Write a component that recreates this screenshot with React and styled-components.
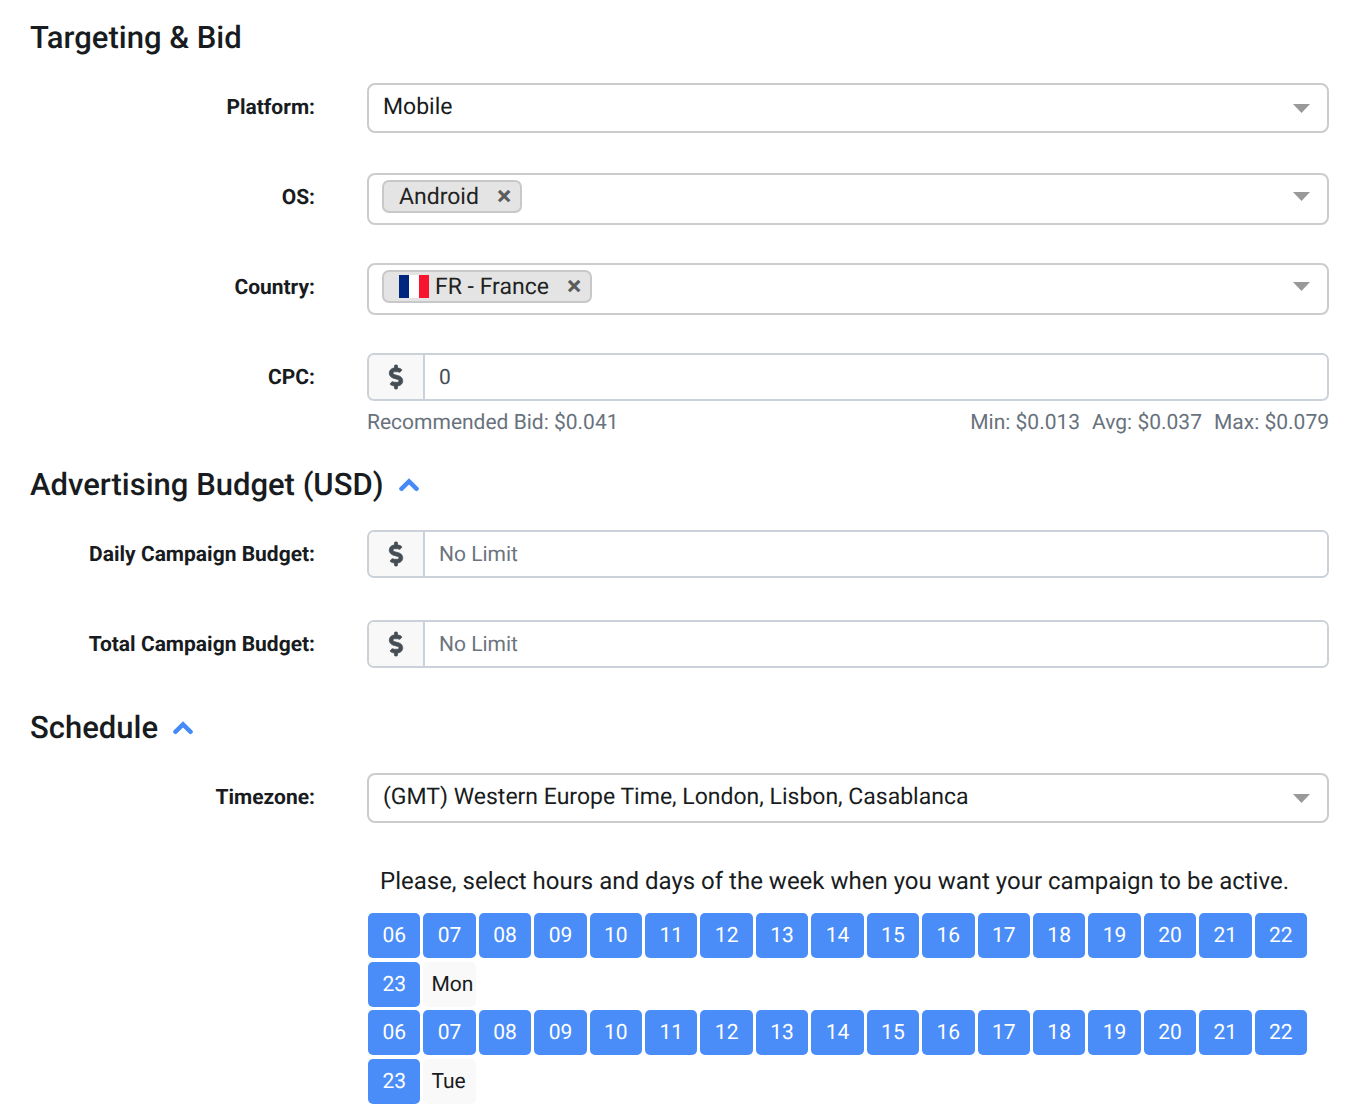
import React, { useState } from "react";
import styled, { createGlobalStyle } from "styled-components";
import { FaDollarSign } from "react-icons/fa";

const GlobalStyle = createGlobalStyle`
  *, *::before, *::after { box-sizing: border-box; }
  body {
    margin: 0;
    background: #fff;
    color: #181c21;
    font-family: Roboto, "Liberation Sans", sans-serif;
    font-size: 23px;
    line-height: 32px;
    text-rendering: geometricPrecision;
  }
  button, input, select { font: inherit; color: inherit; margin: 0; text-rendering: inherit; }
`;

const Page = styled.main`
  padding: 16px 31px 3px 30px;
`;

const Section = styled.section`
  margin-bottom: ${(p) => p.$gap || 0}px;
`;

const Heading = styled.h2`
  display: flex;
  align-items: center;
  gap: 15px;
  margin: 0 0 24px;
  font-size: 31px;
  font-weight: 500;
  line-height: 43px;
`;

const Toggle = styled.button`
  display: flex;
  padding: 0;
  border: 0;
  background: none;
  color: #468af7;
  cursor: pointer;
  svg {
    width: 20px;
    height: 14px;
    transform: ${(p) => (p.$open ? "none" : "rotate(180deg)")};
  }
`;

const Rows = styled.div`
  display: grid;
  row-gap: 38px;
`;

const Row = styled.div`
  display: grid;
  grid-template-columns: 285px minmax(0, 1fr);
  column-gap: 52px;
  align-items: start;
  min-height: 52px;
`;

const Label = styled.label`
  font-size: 21px;
  font-weight: 700;
  line-height: 50px;
  text-align: right;
`;

const Field = styled.div`
  grid-column: 2;
  min-width: 0;
`;

const SelectBox = styled.div`
  display: grid;
  align-items: center;
  height: 50px;
  border: 2px solid #ccc;
  border-radius: 8px;
`;

const SelectInput = styled.select`
  grid-area: 1 / 1;
  width: 100%;
  height: 46px;
  padding: 0 48px 3px 14px;
  border: 0;
  border-radius: 6px;
  background: none;
  appearance: none;
  outline: none;
`;

const ArrowIcon = styled.svg`
  grid-area: 1 / 1;
  justify-self: end;
  flex: none;
  width: 17px;
  height: 9px;
  margin-right: 17px;
  fill: #999;
  pointer-events: none;
`;

const MultiBox = styled.div`
  display: flex;
  align-items: center;
  height: 52px;
  padding: 0 0 5px 13px;
  border: 2px solid #ccc;
  border-radius: 8px;
`;

const Tag = styled.span`
  display: flex;
  align-items: center;
  height: 33px;
  padding: 0 9px 0 15px;
  border: 2px solid #c8c8c8;
  border-radius: 7px;
  background: #e4e4e4;
  color: #222;
  line-height: 29px;
`;

const Flag = styled.svg`
  width: 30px;
  height: 23px;
  margin-right: 6px;
`;

const Remove = styled.button`
  margin-left: 18px;
  padding: 0;
  border: 0;
  background: none;
  color: #5c5c5c;
  font-size: 27px;
  font-weight: 700;
  line-height: 29px;
  cursor: pointer;
`;

const Search = styled.input`
  flex: 1;
  min-width: 0;
  height: 32px;
  padding: 0 8px;
  border: 0;
  background: none;
  outline: none;
`;

const MoneyBox = styled.div`
  display: flex;
  height: 48px;
  border: 2px solid #cbd1d8;
  border-radius: 7px;
  overflow: hidden;
`;

const Currency = styled.span`
  display: flex;
  align-items: center;
  justify-content: center;
  width: 56px;
  border-right: 2px solid #cbd1d8;
  background: #f8f8f8;
  color: #454d55;
  svg {
    width: 24px;
    height: 24px;
    stroke: currentColor;
    stroke-width: 16px;
    overflow: visible;
  }
`;

const MoneyInput = styled.input`
  flex: 1;
  min-width: 0;
  padding: 2px 14px 0;
  border: 0;
  background: #fff;
  color: #454d55;
  font-size: 21px;
  outline: none;
  &::placeholder { color: #6c757d; opacity: 1; }
`;

const Hints = styled.div`
  display: flex;
  justify-content: space-between;
  padding-top: 6px;
  color: #68727c;
  font-size: 21px;
`;

const BidStats = styled.span`
  display: flex;
  gap: 12px;
`;

const Instruction = styled.p`
  margin: 0 0 14px 13px;
  font-size: 24px;
  line-height: 36px;
`;

const Days = styled.div`
  display: grid;
  row-gap: 3px;
  padding: 0 22px 0 1px;
`;

const Day = styled.div`
  display: grid;
  grid-template-columns: repeat(17, minmax(0, 1fr));
  gap: 4px 3px;
`;

const Hour = styled.button`
  height: 45px;
  padding: 0;
  border: 0;
  border-radius: 5px;
  background: ${(p) => (p.$active ? "#4a8df8" : "#f8f8f8")};
  color: ${(p) => (p.$active ? "#fff" : "#181c21")};
  font-size: 21px;
  cursor: pointer;
`;

const DayName = styled.button`
  height: 45px;
  padding: 0 0 0 8px;
  border: 0;
  border-radius: 5px;
  background: #f9f9f9;
  font-size: 21px;
  text-align: left;
  cursor: pointer;
`;

const Arrow = () => (
  <ArrowIcon viewBox="0 0 17 9" aria-hidden="true">
    <path d="M0 0h17L8.500 9z" />
  </ArrowIcon>
);

const ChevronUp = () => (
  <svg viewBox="0 0 20 14" fill="none" stroke="currentColor" strokeWidth="4.400" strokeLinecap="round" aria-hidden="true">
    <path d="M2.400 10.800L10 3.400L17.600 10.800" />
  </svg>
);

function SelectRow({ id, label, options }) {
  return (
    <Row>
      <Label htmlFor={id}>{label}</Label>
      <SelectBox>
        <SelectInput id={id}>
          {options.map((o) => <option key={o}>{o}</option>)}
        </SelectInput>
        <Arrow />
      </SelectBox>
    </Row>
  );
}

function MultiRow({ id, label, value, flag }) {
  const [shown, setShown] = useState(true);
  return (
    <Row>
      <Label htmlFor={id}>{label}</Label>
      <MultiBox>
        {shown && (
          <Tag>
            {flag}
            {value}
            <Remove type="button" aria-label={`Remove ${value}`} onClick={() => setShown(false)}>×</Remove>
          </Tag>
        )}
        <Search id={id} type="text" autoComplete="off" />
        <Arrow />
      </MultiBox>
    </Row>
  );
}

function MoneyRow({ id, label, children, ...input }) {
  return (
    <Row>
      <Label htmlFor={id}>{label}</Label>
      <Field>
        <MoneyBox>
          <Currency><FaDollarSign aria-hidden="true" /></Currency>
          <MoneyInput id={id} type="text" inputMode="decimal" {...input} />
        </MoneyBox>
        {children}
      </Field>
    </Row>
  );
}

function ToggleHeading({ title, open, onToggle }) {
  return (
    <Heading>
      {title}
      <Toggle type="button" $open={open} aria-expanded={open} aria-label={`Toggle ${title}`} onClick={() => onToggle(!open)}>
        <ChevronUp />
      </Toggle>
    </Heading>
  );
}

const HOURS = Array.from({ length: 18 }, (_, i) => String(i + 6).padStart(2, "0"));

function ScheduleDay({ name }) {
  const [off, setOff] = useState([]);
  const flip = (h) => setOff(off.includes(h) ? off.filter((x) => x !== h) : [...off, h]);
  return (
    <Day>
      {HOURS.map((h) => (
        <Hour key={h} type="button" $active={!off.includes(h)} aria-pressed={!off.includes(h)} onClick={() => flip(h)}>
          {h}
        </Hour>
      ))}
      <DayName type="button" onClick={() => setOff(off.length ? [] : HOURS)}>{name}</DayName>
    </Day>
  );
}

const FranceFlag = () => (
  <Flag viewBox="0 0 30 23" aria-hidden="true">
    <path fill="#00267f" d="M0 0h10v23H0z" />
    <path fill="#fff" d="M10 0h10v23H10z" />
    <path fill="#f8142f" d="M20 0h10v23H20z" />
  </Flag>
);

export default function App() {
  const [budgetOpen, setBudgetOpen] = useState(true);
  const [scheduleOpen, setScheduleOpen] = useState(true);
  return (
    <>
      <GlobalStyle />
      <Page>
        <Section $gap={24}>
          <Heading>Targeting &amp; Bid</Heading>
          <Rows>
            <SelectRow id="platform" label="Platform:" options={["Mobile"]} />
            <MultiRow id="os" label="OS:" value="Android" />
            <MultiRow id="country" label="Country:" value="FR - France" flag={<FranceFlag />} />
            <MoneyRow id="cpc" label="CPC:" defaultValue="0">
              <Hints>
                <span>Recommended Bid: $0.041</span>
                <BidStats>
                  <span>Min: $0.013</span>
                  <span>Avg: $0.037</span>
                  <span>Max: $0.079</span>
                </BidStats>
              </Hints>
            </MoneyRow>
          </Rows>
        </Section>
        <Section $gap={34}>
          <ToggleHeading title="Advertising Budget (USD)" open={budgetOpen} onToggle={setBudgetOpen} />
          {budgetOpen && (
            <Rows>
              <MoneyRow id="daily" label="Daily Campaign Budget:" placeholder="No Limit" />
              <MoneyRow id="total" label="Total Campaign Budget:" placeholder="No Limit" />
            </Rows>
          )}
        </Section>
        <Section>
          <ToggleHeading title="Schedule" open={scheduleOpen} onToggle={setScheduleOpen} />
          {scheduleOpen && (
            <Rows>
              <SelectRow id="timezone" label="Timezone:" options={["(GMT) Western Europe Time, London, Lisbon, Casablanca"]} />
              <Row>
                <Field>
                  <Instruction>Please, select hours and days of the week when you want your campaign to be active.</Instruction>
                  <Days>
                    <ScheduleDay name="Mon" />
                    <ScheduleDay name="Tue" />
                  </Days>
                </Field>
              </Row>
            </Rows>
          )}
        </Section>
      </Page>
    </>
  );
}
